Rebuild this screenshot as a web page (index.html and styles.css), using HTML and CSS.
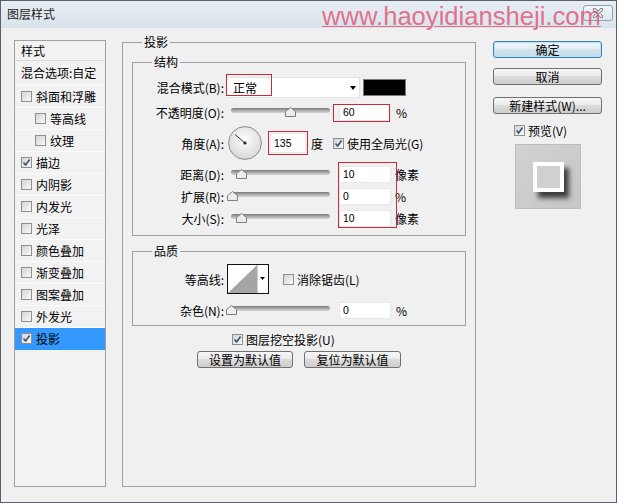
FILE: index.html
```html
<!DOCTYPE html>
<html lang="zh-CN">
<head>
    <meta charset="UTF-8">
    <meta name="viewport" content="width=device-width, initial-scale=1.0">
    <title>图层样式</title>
    <link rel="stylesheet" href="styles.css">
</head>
<body>
    <div class="window">
        <div class="titlebar">
            <span class="title">图层样式</span>
            <span class="watermark">www.haoyidiansheji.com</span>
            <span class="close-btn">
                <svg width="12" height="10" viewBox="0 0 12 10">
                    <path d="M2.5 1.5 L9.5 8.5 M9.5 1.5 L2.5 8.5" stroke="#6f7a86" stroke-width="3.2" stroke-linecap="round"/>
                    <path d="M2.5 1.5 L9.5 8.5 M9.5 1.5 L2.5 8.5" stroke="#fff" stroke-width="1.5" stroke-linecap="round"/>
                </svg>
            </span>
        </div>

        <div class="dialog">
            <!-- left: style list -->
            <div class="style-list">
                <div class="list-head">样式</div>
                <div class="list-blend">混合选项:自定</div>
                <div class="list-item"><span class="cb"></span>斜面和浮雕</div>
                <div class="list-item sub"><span class="cb"></span>等高线</div>
                <div class="list-item sub"><span class="cb"></span>纹理</div>
                <div class="list-item"><span class="cb"><svg viewBox="0 0 9 9"><path d="M1.5 4.5 L3.6 7 L7.6 1.6" fill="none" stroke="#3b4f75" stroke-width="1.6"/></svg></span>描边</div>
                <div class="list-item"><span class="cb"></span>内阴影</div>
                <div class="list-item"><span class="cb"></span>内发光</div>
                <div class="list-item"><span class="cb"></span>光泽</div>
                <div class="list-item"><span class="cb"></span>颜色叠加</div>
                <div class="list-item"><span class="cb"></span>渐变叠加</div>
                <div class="list-item"><span class="cb"></span>图案叠加</div>
                <div class="list-item"><span class="cb"></span>外发光</div>
                <div class="list-item selected"><span class="cb"><svg viewBox="0 0 9 9"><path d="M1.5 4.5 L3.6 7 L7.6 1.6" fill="none" stroke="#3b4f75" stroke-width="1.6"/></svg></span>投影</div>
            </div>

            <!-- middle: drop shadow settings -->
            <fieldset class="group main-group">
                <legend>投影</legend>

                <fieldset class="group">
                    <legend>结构</legend>
                    <div class="row row-blend">
                        <label class="lbl">混合模式(B):</label>
                        <div class="select">
                            <span>正常</span>
                            <i class="arrow"></i>
                            <span class="mark mark-blend"></span>
                        </div>
                        <span class="swatch"></span>
                    </div>
                    <div class="row row-opacity">
                        <label class="lbl">不透明度(O):</label>
                        <div class="slider"><span class="thumb" style="left: 59px"><svg width="11" height="10" viewBox="0 0 11 10"><path d="M5.5 .5 L10.5 4.5 V9.5 H.5 V4.5 Z" fill="#ececec" stroke="#7d7d7d"/></svg></span></div>
                        <span class="field">
                            <input class="num" type="text" value="60">
                            <span class="mark mark-opacity"></span>
                        </span>
                        <span class="unit">%</span>
                    </div>
                    <div class="row row-angle">
                        <label class="lbl">角度(A):</label>
                        <svg class="dial" width="34" height="34" viewBox="0 0 34 34">
                            <defs>
                                <radialGradient id="dialfill" cx="50%" cy="40%" r="60%">
                                    <stop offset="0" stop-color="#fdfdfd"/>
                                    <stop offset="1" stop-color="#d8d8d8"/>
                                </radialGradient>
                            </defs>
                            <circle cx="17" cy="17" r="16.4" fill="url(#dialfill)" stroke="#8c8c8c"/>
                            <line x1="17" y1="17" x2="7" y2="8.5" stroke="#333"/>
                            <circle cx="17" cy="17" r="1.6" fill="#222"/>
                        </svg>
                        <span class="field field-angle">
                            <input class="num num-angle" type="text" value="135">
                            <span class="mark mark-angle"></span>
                        </span>
                        <span class="unit">度</span>
                        <span class="check check-global"><span class="cb"><svg viewBox="0 0 9 9"><path d="M1.5 4.5 L3.6 7 L7.6 1.6" fill="none" stroke="#3b4f75" stroke-width="1.6"/></svg></span>使用全局光(G)</span>
                    </div>
                    <div class="row row-px row-first">
                        <label class="lbl">距离(D):</label>
                        <div class="slider"><span class="thumb" style="left: 10px"><svg width="11" height="10" viewBox="0 0 11 10"><path d="M5.5 .5 L10.5 4.5 V9.5 H.5 V4.5 Z" fill="#ececec" stroke="#7d7d7d"/></svg></span></div>
                        <span class="field">
                            <input class="num" type="text" value="10">
                            <span class="mark mark-px"></span>
                        </span>
                        <span class="unit unit-px">像素</span>
                    </div>
                    <div class="row row-px">
                        <label class="lbl">扩展(R):</label>
                        <div class="slider"><span class="thumb" style="left: 1px"><svg width="11" height="10" viewBox="0 0 11 10"><path d="M5.5 .5 L10.5 4.5 V9.5 H.5 V4.5 Z" fill="#ececec" stroke="#7d7d7d"/></svg></span></div>
                        <span class="field"><input class="num" type="text" value="0"></span>
                        <span class="unit unit-px">%</span>
                    </div>
                    <div class="row row-px">
                        <label class="lbl">大小(S):</label>
                        <div class="slider"><span class="thumb" style="left: 10px"><svg width="11" height="10" viewBox="0 0 11 10"><path d="M5.5 .5 L10.5 4.5 V9.5 H.5 V4.5 Z" fill="#ececec" stroke="#7d7d7d"/></svg></span></div>
                        <span class="field"><input class="num" type="text" value="10"></span>
                        <span class="unit unit-px">像素</span>
                    </div>
                </fieldset>

                <fieldset class="group group-quality">
                    <legend>品质</legend>
                    <div class="row row-contour">
                        <label class="lbl">等高线:</label>
                        <svg class="contour" width="42" height="30" viewBox="0 0 42 30">
                            <rect x="0.5" y="0.5" width="41" height="29" fill="#fff" stroke="#111"/>
                            <path d="M1 29 L30 1 V29 Z" fill="#a5a5a5"/>
                            <line x1="30.5" y1="1" x2="30.5" y2="29" stroke="#d0d0d0"/>
                            <path d="M33 13 H38 L35.5 16 Z" fill="#111"/>
                        </svg>
                        <span class="check check-alias"><span class="cb"></span>消除锯齿(L)</span>
                    </div>
                    <div class="row row-noise">
                        <label class="lbl">杂色(N):</label>
                        <div class="slider"><span class="thumb" style="left: 0px"><svg width="11" height="10" viewBox="0 0 11 10"><path d="M5.5 .5 L10.5 4.5 V9.5 H.5 V4.5 Z" fill="#ececec" stroke="#7d7d7d"/></svg></span></div>
                        <span class="field"><input class="num" type="text" value="0"></span>
                        <span class="unit">%</span>
                    </div>
                </fieldset>

                <div class="check knockout"><span class="cb"><svg viewBox="0 0 9 9"><path d="M1.5 4.5 L3.6 7 L7.6 1.6" fill="none" stroke="#3b4f75" stroke-width="1.6"/></svg></span>图层挖空投影(U)</div>
                <div class="defaults">
                    <button class="btn btn-set">设置为默认值</button>
                    <button class="btn btn-reset">复位为默认值</button>
                </div>
            </fieldset>

            <!-- right: actions and preview -->
            <div class="side">
                <button class="btn btn-default">确定</button>
                <button class="btn btn-cancel">取消</button>
                <button class="btn btn-new">新建样式(W)...</button>
                <div class="check preview-check"><span class="cb"><svg viewBox="0 0 9 9"><path d="M1.5 4.5 L3.6 7 L7.6 1.6" fill="none" stroke="#3b4f75" stroke-width="1.6"/></svg></span>预览(V)</div>
                <div class="preview">
                    <div class="sample"></div>
                </div>
            </div>
        </div>
    </div>
</body>
</html>
```

FILE: styles.css
```css
* {
    box-sizing: border-box;
}

body {
    margin: 0;
    font-family: "Noto Sans CJK SC", "Noto Sans", sans-serif;
    font-size: 12px;
    color: #000;
    background: #f0f0f0;
}

.window {
    width: 617px;
    height: 503px;
    border: 1px solid #58626d;
    display: flex;
    flex-direction: column;
    background: #f0f0f0;
}

/* title bar */
.titlebar {
    position: relative;
    height: 27px;
    display: flex;
    align-items: center;
    padding: 0 3px 2px 6px;
    background: linear-gradient(#e7edf3, #dae3ec);
}

.title {
    color: #1a1a1a;
}

.watermark {
    position: absolute;
    left: 321px;
    top: 2px;
    font-family: "Liberation Sans", Arial, sans-serif;
    font-size: 25.6px;
    line-height: 26px;
    color: rgba(226, 80, 112, 0.8);
    text-decoration: underline;
    text-decoration-thickness: 1px;
    text-underline-offset: 1px;
}

.close-btn {
    margin-left: auto;
    align-self: flex-start;
    margin-top: 4px;
    width: 30px;
    height: 16px;
    display: flex;
    align-items: center;
    justify-content: center;
    border: 1px solid #95a1ad;
    border-radius: 3px;
    background: linear-gradient(#f3f6f9, #dfe6ed);
}

.dialog {
    flex: 1;
    display: flex;
    padding: 12px 14px 15px 13px;
}

/* style list */
.style-list {
    width: 92px;
    border: 1px solid #a0a0a0;
    background: #f2f2f2;
}

.list-head {
    height: 20px;
    line-height: 19px;
    padding-left: 6px;
    border-bottom: 1px solid #d8d8d8;
}

.list-blend {
    height: 25px;
    line-height: 24px;
    padding-left: 6px;
    border-bottom: 1px solid #fdfdfd;
}

.list-item {
    height: 22px;
    display: flex;
    align-items: center;
    padding-left: 6px;
    border-bottom: 1px solid #fbfbfb;
}

.list-item.sub {
    padding-left: 20px;
}

.list-item .cb {
    margin-right: 4px;
}

.list-item.selected {
    background: #3399ff;
    border-bottom-color: #3399ff;
}

/* checkbox */
.cb {
    flex: none;
    width: 11px;
    height: 11px;
    border: 1px solid #8e8f8f;
    background: linear-gradient(135deg, #d4d4d4, #f9f9f9);
    display: flex;
}

.cb svg {
    width: 9px;
    height: 9px;
}

.check {
    display: flex;
    align-items: center;
}

.check .cb {
    margin-right: 3px;
}

/* fieldsets */
.group {
    margin: 0;
    padding: 0 9px 6px;
    border: 1px solid #a0a0a0;
    min-width: 0;
}

.group legend {
    margin-left: 10px;
    padding: 0 2px;
    height: 14px;
    line-height: 14px;
}

.main-group {
    width: 354px;
    flex: none;
    margin: -5px 0 0 16px;
    padding: 6px 9px 0;
}

.group-quality {
    margin-top: 8px;
    padding-bottom: 4px;
}

.row {
    display: flex;
    align-items: center;
}

.lbl {
    flex: none;
    width: 82px;
    text-align: right;
}

.row-blend {
    margin-top: 8px;
    height: 21px;
}

.row-opacity {
    margin-top: 5px;
    height: 18px;
}

.row-angle {
    margin-top: 5px;
    height: 34px;
}

.row-px {
    height: 22px;
}

.row-first {
    margin-top: 3px;
}

.row-contour {
    margin-top: 6px;
    height: 30px;
}

.row-noise {
    margin-top: 5px;
    height: 22px;
}

/* controls */
.select {
    position: relative;
    margin-left: 2px;
    width: 134px;
    height: 21px;
    display: flex;
    align-items: center;
    padding-left: 6px;
    background: #fff;
    border: 1px solid #e4e4e4;
}

.arrow {
    margin-left: auto;
    margin-right: 3px;
    border-left: 3.5px solid transparent;
    border-right: 3.5px solid transparent;
    border-top: 4px solid #000;
}

.swatch {
    margin-left: 3px;
    width: 43px;
    height: 17px;
    background: #000;
    border: 1px solid #7a7a7a;
}

.slider {
    position: relative;
    flex: none;
    margin: 0 0 4px 7px;
    width: 99px;
    height: 5px;
    border-radius: 3px;
    background: linear-gradient(#7a7a7a, #b4b4b4 60%, #d6d6d6);
}

.thumb {
    position: absolute;
    top: -1px;
    margin-left: -5px;
    width: 11px;
    height: 10px;
    display: block;
}

.thumb svg {
    display: block;
}

.field {
    position: relative;
    margin-left: 9px;
    display: flex;
}

.num {
    width: 52px;
    height: 17px;
    margin: 0;
    padding: 0 0 0 3px;
    border: 1px solid #e8e8e8;
    background: #fff;
    font-family: "Liberation Sans", Arial, sans-serif;
    font-size: 10.5px;
    color: #000;
    outline: none;
}

.num-angle {
    width: 36px;
    height: 20px;
}

.field-angle {
    margin-left: 8px;
}

.dial {
    flex: none;
    margin-left: 4px;
}

.unit {
    margin-left: 5px;
}

.unit-px {
    margin-left: 4px;
}

.check-global {
    margin-left: 10px;
}

.contour {
    flex: none;
    margin-left: 3px;
}

.check-alias {
    margin-left: 14px;
}

/* red annotation boxes */
.mark {
    position: absolute;
    border: 1px solid #cc2a3c;
}

.mark-blend {
    left: -1px;
    top: -4px;
    width: 46px;
    height: 22px;
}

.mark-opacity {
    left: -6px;
    top: 0;
    width: 57px;
    height: 18px;
}

.mark-angle {
    left: -2px;
    top: -2px;
    width: 40px;
    height: 24px;
}

.mark-px {
    left: -1px;
    top: -4px;
    width: 59px;
    height: 66px;
}

.knockout {
    margin-top: 7px;
    padding-left: 100px;
    height: 12px;
}

.defaults {
    margin-top: 6px;
    display: flex;
    justify-content: center;
    gap: 11px;
}

/* buttons */
.btn {
    height: 17px;
    margin: 0;
    padding: 0;
    border: 1px solid #707070;
    border-radius: 3px;
    background: linear-gradient(#f6f6f6, #ececec 45%, #dcdcdc 50%, #cdcdcd);
    font-family: "Noto Sans CJK SC", "Noto Sans", sans-serif;
    font-size: 12px;
    line-height: 14px;
    color: #000;
    text-align: center;
}

.btn-set {
    width: 96px;
}

.btn-reset {
    width: 97px;
}

.side {
    width: 109px;
    margin-left: 17px;
    display: flex;
    flex-direction: column;
}

.btn-default {
    margin-top: 1px;
    border-color: #3c7fb1;
    box-shadow: inset 0 0 0 1px #b4e3fa;
    background: linear-gradient(#eef6fb, #e2eef6 45%, #d3e3ee 50%, #c6dbe9);
}

.btn-cancel {
    margin-top: 10px;
}

.btn-new {
    margin-top: 12px;
}

.preview-check {
    margin-top: 8px;
    height: 16px;
    padding-left: 21px;
}

.preview {
    margin: 6px 0 0 22px;
    width: 66px;
    height: 65px;
    padding: 17px 0 0 17px;
    border: 1px solid #bdbdbd;
    background: linear-gradient(135deg, #d2d2d2, #c6c6c6);
}

.sample {
    width: 31px;
    height: 30px;
    border: 4px solid #fff;
    background: #d0d0d0;
    box-shadow: 5px 6px 5px rgba(0, 0, 0, 0.7);
}
```
